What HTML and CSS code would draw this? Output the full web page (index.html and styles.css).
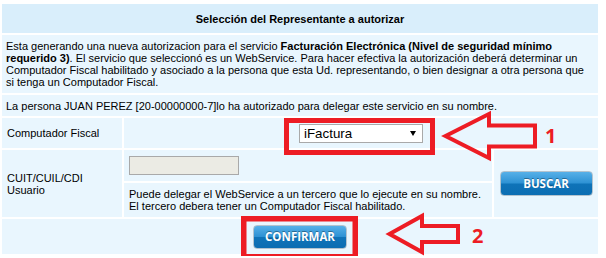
FILE: index.html
```html
<!DOCTYPE html>
<html>
<head>
    <meta charset="UTF-8">
    <title>Selección del Representante</title>
    <link rel="stylesheet" href="styles.css">
</head>
<body>
    <div class="page">
        <table class="form-table">
            <colgroup>
                <col class="col-label">
                <col class="col-main">
                <col class="col-action">
            </colgroup>
            <tr>
                <th colspan="3" class="table-title">Selección del Representante a autorizar</th>
            </tr>
            <tr>
                <td colspan="3" class="intro">Esta generando una nueva autorizacion para el servicio <b>Facturación Electrónica (Nivel de seguridad mínimo requerido 3)</b>. El servicio que seleccionó es un WebService. Para hacer efectiva la autorización deberá determinar un Computador Fiscal habilitado y asociado a la persona que esta Ud. representando, o bien designar a otra persona que si tenga un Computador Fiscal.</td>
            </tr>
            <tr>
                <td colspan="3" class="notice">La persona JUAN PEREZ [20-00000000-7]lo ha autorizado para delegar este servicio en su nombre.</td>
            </tr>
            <tr>
                <td class="label">Computador Fiscal</td>
                <td colspan="2" class="select-cell">
                    <div class="fake-select">
                        <span>iFactura</span>
                        <svg class="caret" width="6" height="5" viewBox="0 0 6 5"><polygon points="0,0 6,0 3,5" fill="#000"/></svg>
                    </div>
                </td>
            </tr>
            <tr>
                <td rowspan="2" class="label">CUIT/CUIL/CDI<br>Usuario</td>
                <td class="input-cell"><input type="text" class="cuit-input" disabled></td>
                <td rowspan="2" class="action-cell"><button class="blue-button search-button">BUSCAR</button></td>
            </tr>
            <tr>
                <td class="hint">Puede delegar el WebService a un tercero que lo ejecute en su nombre.<br>El tercero debera tener un Computador Fiscal habilitado.</td>
            </tr>
            <tr>
                <td colspan="3" class="confirm-cell"><button class="blue-button confirm-button">CONFIRMAR</button></td>
            </tr>
        </table>

        <svg class="annotations" width="606" height="258" viewBox="0 0 606 258">
            <rect x="286.5" y="118.5" width="146" height="32" fill="none" stroke="#ed1c24" stroke-width="5"/>
            <rect x="243.75" y="216.75" width="111.5" height="38" fill="none" stroke="#ed1c24" stroke-width="5.5"/>
            <polygon points="445.5,134 489,112 489,123.5 535,123.5 535,144.5 489,144.5 489,156" fill="none" stroke="#ed1c24" stroke-width="4" stroke-linejoin="miter"/>
            <polygon points="389.5,232 422,214 422,224 458,224 458,240 422,240 422,250" fill="none" stroke="#ed1c24" stroke-width="4" stroke-linejoin="miter"/>
            <text x="545" y="141" class="step-number">1</text>
            <text x="472" y="241" class="step-number">2</text>
        </svg>
    </div>
</body>
</html>
```

FILE: styles.css
```css
body {
    margin: 0;
    padding-top: 2px;
    background: #fff;
    font-family: "Liberation Sans", Arial, sans-serif;
    font-size: 11px;
    color: #000;
}

.page {
    position: relative;
    width: 606px;
}

.form-table {
    width: 600px;
    table-layout: fixed;
    border-collapse: separate;
    border-spacing: 2px;
    background: #fff;
}

.col-label {
    width: 120px;
}

.col-main {
    width: 368px;
}

.col-action {
    width: 104px;
}

.form-table th,
.form-table td {
    padding: 4px;
    background: #e9f6fe;
    font-size: 11px;
    line-height: normal;
    vertical-align: middle;
}

.table-title {
    height: 29px;
    box-sizing: border-box;
    background: #d9eefb !important;
    font-weight: bold;
    text-align: center;
}

.intro {
    height: 58px;
    box-sizing: border-box;
}

.notice {
    height: 21px;
    box-sizing: border-box;
}

.label {
    padding-left: 5px !important;
}

.select-cell {
    height: 30px;
    box-sizing: border-box;
    text-align: center;
}

.fake-select {
    display: inline-flex;
    align-items: center;
    justify-content: space-between;
    width: 124px;
    height: 19px;
    box-sizing: border-box;
    padding: 0 6px 0 4px;
    background: #fff;
    border: 1px solid #a9a9a9;
    font-size: 13.33px;
    text-align: left;
}

.caret {
    display: block;
}

.input-cell {
    height: 31px;
    box-sizing: border-box;
    padding-left: 5px !important;
}

.cuit-input {
    display: block;
    width: 110px;
    height: 19px;
    box-sizing: border-box;
    margin: 0;
    background: #ebebe4;
    border: 1px solid #a9a9a9;
}

.hint {
    height: 34px;
    box-sizing: border-box;
    padding-left: 5px !important;
}

.action-cell {
    text-align: center;
}

.confirm-cell {
    height: 35px;
    box-sizing: border-box;
    text-align: center;
}

.blue-button {
    height: 25px;
    padding: 0;
    font-family: "Open Sans", sans-serif;
    font-size: 11.5px;
    font-weight: bold;
    color: #fff;
    text-shadow: 0 -1px 0 rgba(0, 0, 0, 0.35);
    background: linear-gradient(#57b0e8 0%, #2e92d4 48%, #0f73b8 52%, #0b6db2 100%);
    border: 1px solid #b4c3ce;
    border-radius: 4px;
    cursor: pointer;
}

.search-button {
    width: 93px;
}

.confirm-button {
    width: 94px;
    height: 24px;
}

.annotations {
    position: absolute;
    top: 0;
    left: 0;
    pointer-events: none;
}

.step-number {
    font-family: "Open Sans", sans-serif;
    font-size: 20px;
    font-weight: bold;
    fill: #ed1c24;
}
```
